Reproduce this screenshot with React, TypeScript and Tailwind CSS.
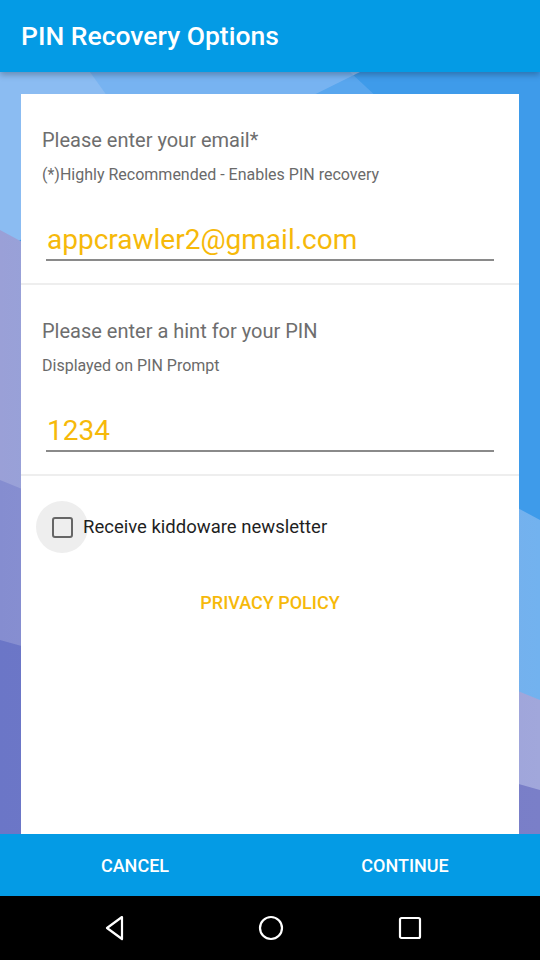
import React from "react";

function Wallpaper() {
  return (
    <svg
      className="absolute inset-0 h-full w-full"
      viewBox="0 72 540 762"
      preserveAspectRatio="none"
    >
      <defs>
        <linearGradient id="b2" x1="0" x2="1" y1="0" y2="0">
          <stop offset="0" stopColor="#9aa0d7" />
          <stop offset="1" stopColor="#72b2ef" />
        </linearGradient>
        <linearGradient id="b3" x1="0" x2="1" y1="0" y2="0">
          <stop offset="0" stopColor="#858dd0" />
          <stop offset="1" stopColor="#a1a7db" />
        </linearGradient>
        <linearGradient id="b4" x1="0" x2="1" y1="0" y2="0">
          <stop offset="0" stopColor="#6b76c7" />
          <stop offset="1" stopColor="#7a7fc8" />
        </linearGradient>
      </defs>
      <rect x="0" y="72" width="540" height="762" fill="#3e9bea" />
      <polygon points="0,72 360,72 0,250" fill="#8bbcf2" />
      <polygon points="90,72 350,72 380,100 110,100" fill="#6aaef0" opacity="0.6" />
      <polygon points="0,230 540,520 540,834 0,834" fill="url(#b2)" />
      <polygon points="0,480 540,700 540,834 0,834" fill="url(#b3)" />
      <polygon points="0,640 540,790 540,834 0,834" fill="url(#b4)" />
    </svg>
  );
}

function Field({
  label,
  hint,
  value,
}: {
  label: string;
  hint: string;
  value: string;
}) {
  return (
    <div className="flex flex-col border-b-2 border-[#eeeeee] px-[21px] pt-[35px] pb-[22px]">
      <p className="text-[20px] leading-[22px] text-[#6e6e6e]">{label}</p>
      <p className="mt-[15px] text-[16px] leading-[18px] text-[#6a6a6a]">{hint}</p>
      <div className="mt-[40px] mx-[4px] border-b-2 border-[#8a8a8a] pb-[3px]">
        <p className="pl-[1px] text-[28px] leading-[32px] text-[#f6b90a]">{value}</p>
      </div>
    </div>
  );
}

export default function App() {
  return (
    <div
      className="flex h-[960px] w-[540px] flex-col bg-white"
      style={{ fontFamily: "Roboto, 'Noto Sans', sans-serif" }}
    >
      <div className="relative z-10 flex h-[72px] items-center bg-[#049be5] px-[21px] shadow-[0_3px_6px_rgba(0,0,0,0.25)]">
        <h1 className="text-[26.5px] font-medium text-white">PIN Recovery Options</h1>
      </div>

      <div className="relative flex flex-1 flex-col">
        <Wallpaper />
        <div className="relative mx-[21px] mt-[22px] flex flex-1 flex-col bg-white">
          <Field
            label="Please enter your email*"
            hint="(*)Highly Recommended - Enables PIN recovery"
            value="appcrawler2@gmail.com"
          />
          <Field
            label="Please enter a hint for your PIN"
            hint="Displayed on PIN Prompt"
            value="1234"
          />

          <div className="mt-[25px] flex items-center pl-[15px]">
            <div className="flex h-[52px] w-[52px] items-center justify-center rounded-full bg-[#eeeeee]">
              <div className="h-[21px] w-[21px] rounded-[3px] border-[2.5px] border-[#666666]" />
            </div>
            <span className="-ml-[5px] text-[18.5px] leading-[22px] text-[#1f1f1f]">
              Receive kiddoware newsletter
            </span>
          </div>

          <div className="mt-[39px] text-center text-[18px] leading-[22px] font-medium text-[#f6b90a]">
            PRIVACY POLICY
          </div>
        </div>
      </div>

      <div className="flex h-[62px] bg-[#049be5] text-[18px] font-medium text-white">
        <div className="flex flex-1 items-center justify-center">CANCEL</div>
        <div className="flex flex-1 items-center justify-center">CONTINUE</div>
      </div>

      <div className="flex h-[64px] items-center bg-black pl-[103px]">
        <svg width="24" height="26" viewBox="0 0 24 26" fill="none" stroke="white" strokeWidth="2.2" strokeLinejoin="round">
          <path d="M19 2 L4 13 L19 24 Z" />
        </svg>
        <svg className="ml-[131px]" width="26" height="26" viewBox="0 0 26 26" fill="none" stroke="white" strokeWidth="2.2">
          <circle cx="13" cy="13" r="11" />
        </svg>
        <svg className="ml-[114px]" width="24" height="24" viewBox="0 0 24 24" fill="none" stroke="white" strokeWidth="2.2">
          <rect x="2" y="2" width="20" height="20" rx="1.5" />
        </svg>
      </div>
    </div>
  );
}
